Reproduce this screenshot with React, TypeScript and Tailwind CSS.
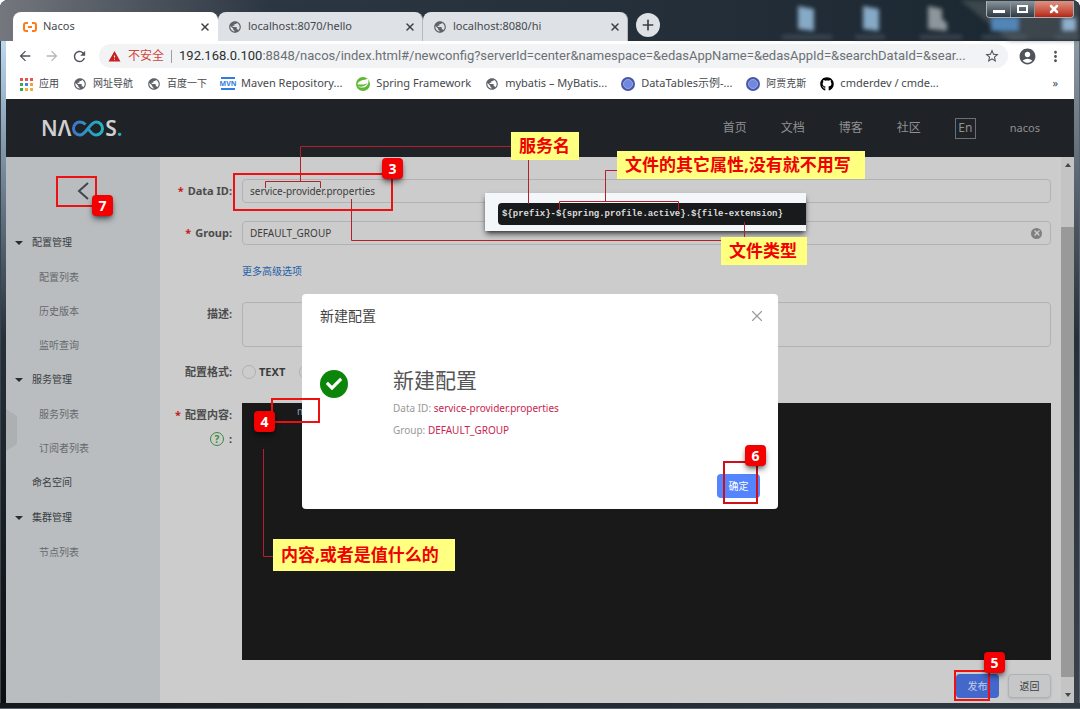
import React from 'react';
import { FaGithub, FaCheck } from 'react-icons/fa';
import { MdAccountCircle, MdPublic, MdStarBorder, MdArrowBack, MdArrowForward, MdRefresh, MdWarning, MdMoreVert } from 'react-icons/md';
import { X, Plus } from 'lucide-react';

type Tab = {
  title: string;
  active?: boolean;
};

type MenuGroup = {
  label: string;
  children: string[];
};

type Bookmark = {
  label: string;
  icon: React.ReactNode;
  cjk?: boolean;
};

const URL_HOST = '192.168.0.100';
const URL_REST =
  ':8848/nacos/index.html#/newconfig?serverId=center&namespace=&edasAppName=&edasAppId=&searchDataId=&sear...';

const TABS: Tab[] = [
  { title: 'Nacos', active: true },
  { title: 'localhost:8070/hello' },
  { title: 'localhost:8080/hi' },
];

const MENU: MenuGroup[] = [
  { label: '配置管理', children: ['配置列表', '历史版本', '监听查询'] },
  { label: '服务管理', children: ['服务列表', '订阅者列表'] },
  { label: '命名空间', children: [] },
  { label: '集群管理', children: ['节点列表'] },
];

const NacosFavicon = () => (
  <svg className="h-[14px] w-[14px] shrink-0" viewBox="0 0 14 14" fill="none" stroke="#ff7a1a" strokeWidth="2">
    <path d="M5 3H3Q1 3 1 5v4q0 2 2 2h2M9 3h2q2 0 2 2v4q0 2-2 2H9M5 7h4" />
  </svg>
);

const Globe = () => <MdPublic className="h-[14px] w-[14px] shrink-0 text-[#5f6368]" />;

const AppsIcon = () => (
  <svg className="h-[14px] w-[14px] shrink-0" viewBox="0 0 14 14">
    <path d="M1 1h3v3H1zM6 1h3v3H6zM11 1h3v3h-3z" fill="#e2574c" />
    <path d="M1 6h3v3H1z" fill="#3aa757" />
    <path d="M6 6h3v3H6z" fill="#4a7fe0" />
    <path d="M11 6h3v3h-3z" fill="#e8a33d" />
    <path d="M1 11h3v3H1z" fill="#3aa757" />
    <path d="M6 11h3v3H6zM11 11h3v3h-3z" fill="#e8b23d" />
  </svg>
);

const MavenIcon = () => (
  <span className="flex h-[13px] w-[14px] shrink-0 items-center justify-center border-y-2 border-[#2f7de0] text-[7px] leading-[9px] font-bold text-[#2f7de0]">
    MVN
  </span>
);

const SpringIcon = () => (
  <svg className="h-[14px] w-[14px] shrink-0" viewBox="0 0 14 14">
    <circle cx="7" cy="7" r="7" fill="#5fb832" />
    <path d="M1.500 7.500C2 3 8 3.500 12 1.500c1.500 4-.5 8.500-5 9-2.500.2-4-.3-5-1 4 .5 7.500 0 9.500-3.500-2.500 2-6 1.500-10 1.500z" fill="#fff" />
  </svg>
);

const BallIcon = () => (
  <svg className="h-[14px] w-[14px] shrink-0" viewBox="0 0 14 14">
    <circle cx="7" cy="7" r="7" fill="#4a56a6" />
    <circle cx="7" cy="7" r="4.500" fill="#7089e0" stroke="#9aa8e6" />
  </svg>
);

const BOOKMARKS: Bookmark[] = [
  { label: '应用', icon: <AppsIcon />, cjk: true },
  { label: '网址导航', icon: <Globe />, cjk: true },
  { label: '百度一下', icon: <Globe />, cjk: true },
  { label: 'Maven Repository...', icon: <MavenIcon /> },
  { label: 'Spring Framework', icon: <SpringIcon /> },
  { label: 'mybatis – MyBatis...', icon: <Globe /> },
  { label: 'DataTables示例-...', icon: <BallIcon /> },
  { label: '阿贾克斯', icon: <BallIcon />, cjk: true },
  { label: 'cmderdev / cmde...', icon: <FaGithub className="h-[14px] w-[14px] shrink-0 text-black" /> },
];

const TitleBar = () => (
  <div className="relative flex h-[41px] items-end bg-linear-to-r from-[#74777d] via-[#2c3642] via-25% to-[#1b2730] pl-[13px]">
    {TABS.map((tab) => (
      <div
        key={tab.title}
        className={`flex h-[29px] w-[205px] shrink-0 items-center gap-1.5 rounded-t-lg border-r pr-1.5 pl-2.5 text-[11px] text-[#45494d] ${
          tab.active ? 'border-white bg-white' : 'border-[#b5b8bd] bg-[#dee1e6]'
        }`}
      >
        {tab.active ? <NacosFavicon /> : <Globe />}
        <span className="flex-1">{tab.title}</span>
        <button aria-label="Close tab">
          <X className="h-3 w-3 text-[#3c4043]" strokeWidth={3} />
        </button>
      </div>
    ))}
    <button
      aria-label="New tab"
      className="mb-1 ml-2 flex h-6 w-6 items-center justify-center rounded-full bg-[#dee1e6]"
    >
      <Plus className="h-4 w-4 text-[#3c4043]" strokeWidth={2.5} />
    </button>

    {/* DESKTOP SEEN THROUGH THE GLASS */}
    <svg className="absolute top-0 right-0 h-[41px] w-[300px] blur-[2px]" viewBox="0 0 300 41">
      <path d="M180 0L300 0V41H230z" fill="#5b6468" opacity="0.5" />
      <path d="M18 6l16 3v22l-16-2zM83 6l16 3v22l-16-2z" fill="#86a9c6" />
      <path d="M148 6l14 3v10l5 4v8l-19-2z" fill="#8d979b" />
      <path d="M211 17h28v14h-28z" fill="#5286b8" />
      <path d="M282 18h14v13h-14z" fill="#8fb0cc" />
      <path d="M2 37h50M75 37h30M140 37h42M202 37h45M275 37h25" stroke="#5a6670" strokeWidth="4" opacity="0.5" />
    </svg>

    <div className="absolute top-px right-[6px] flex h-[17px] overflow-hidden rounded-b border border-t-0 border-[#aab2b8]">
      <button aria-label="Minimize" className="flex w-6 items-end justify-center border-r border-[#8b949b] bg-linear-to-b from-[#8d969d] to-[#2e3a44] pb-1">
        <span className="h-[3px] w-3 bg-white" />
      </button>
      <button aria-label="Maximize" className="flex w-6 items-center justify-center border-r border-[#8b949b] bg-linear-to-b from-[#8d969d] to-[#2e3a44]">
        <span className="h-2 w-[11px] border-2 border-white" />
      </button>
      <button aria-label="Close" className="flex w-[38px] items-center justify-center bg-linear-to-b from-[#dd9382] to-[#b8200f]">
        <X className="h-3 w-3 text-white" strokeWidth={5} />
      </button>
    </div>
  </div>
);

const BrowserToolbar = () => (
  <div className="bg-white pt-[3px] text-[#45494d]">
    <div className="flex h-6 items-center">
      <div className="flex w-[93px] shrink-0 items-center gap-[11px] pl-[11px]">
        <button aria-label="Back">
          <MdArrowBack className="h-4 w-4 text-[#50545a]" />
        </button>
        <button aria-label="Forward">
          <MdArrowForward className="h-4 w-4 text-[#b4b7bb]" />
        </button>
        <button aria-label="Reload">
          <MdRefresh className="h-[17px] w-[17px] text-[#50545a]" />
        </button>
      </div>
      <div className="flex h-6 min-w-0 flex-1 items-center rounded-full bg-[#f1f3f4] pr-2 pl-[9px]">
        <MdWarning className="h-[13px] w-[13px] shrink-0 text-[#c5221f]" />
        <span className="ml-[7px] shrink-0 text-[12px] text-[#d0453a]">不安全</span>
        <span className="mx-[7px] h-[13px] w-px shrink-0 bg-[#9a9da1]" />
        <span className="min-w-0 flex-1 font-['Roboto',sans-serif] text-[13px] whitespace-nowrap text-[#6c7075]">
          <span className="text-[#2b2e31]">{URL_HOST}</span>
          {URL_REST}
        </span>
        <MdStarBorder className="h-4 w-4 shrink-0 text-[#50545a]" />
      </div>
      <div className="flex w-[66px] shrink-0 items-center gap-2.5 pl-2.5">
        <MdAccountCircle className="h-[19px] w-[19px] text-[#50545a]" />
        <MdMoreVert className="h-[17px] w-[17px] text-[#50545a]" />
      </div>
    </div>
    <nav className="flex h-[31px] items-center gap-[14px] pl-[13px] whitespace-nowrap">
      {BOOKMARKS.map((bookmark) => (
        <a
          key={bookmark.label}
          href="#"
          className={`flex items-center gap-1.5 ${bookmark.cjk ? 'text-[10px]' : 'text-[11px]'}`}
        >
          {bookmark.icon}
          {bookmark.label}
        </a>
      ))}
      <span className="mr-4 ml-auto text-[11px]">»</span>
    </nav>
  </div>
);

const NacosLogo = () => (
  <a href="#" aria-label="NACOS" className="flex items-center text-[21px] leading-none font-semibold text-[#cfd0d1]">
    NΛ
    <svg className="h-[17px] w-[34px]" viewBox="0 0 34 17" fill="none" strokeWidth="3">
      <defs>
        <linearGradient id="loop" x1="0" x2="1">
          <stop offset="0" stopColor="#3a78c9" />
          <stop offset="1" stopColor="#22b5c0" />
        </linearGradient>
      </defs>
      <path
        d="M14.500 4.500C12.800 2.700 11 2 9 2a6.500 6.500 0 0 0 0 13C15 15 19 2 25 2a6.500 6.500 0 0 1 0 13C21.500 15 19 11.500 17 8.500"
        stroke="url(#loop)"
      />
    </svg>
    S<span className="text-[#22b5c0]">.</span>
  </a>
);

const NacosHeader = () => (
  <header className="flex h-[58px] items-center bg-[#1f2226] pr-[34px] pl-[35px] text-[12px] text-[#8f9193]">
    <NacosLogo />
    <nav className="ml-auto flex items-center gap-[34px]">
      <a href="#">首页</a>
      <a href="#">文档</a>
      <a href="#">博客</a>
      <a href="#">社区</a>
      <button className="h-[21px] w-[21px] border border-[#6d7073] leading-[18px]">En</button>
      <a href="#" className="text-[11px]">nacos</a>
    </nav>
  </header>
);

const Sidebar = () => (
  <aside className="relative w-[154px] shrink-0 bg-[#b9bdc0] text-[10px] text-[#3a3d40]">
    <div className="flex h-[68px] items-center justify-center">
      <button aria-label="Back">
        <svg className="h-[18px] w-3" viewBox="0 0 12 18" fill="none" stroke="#42464a" strokeWidth="2">
          <path d="M11 1L2 9l9 8" />
        </svg>
      </button>
    </div>
    <ul>
      {MENU.map((group) => (
        <li key={group.label}>
          <div className="flex h-[35px] items-center pl-[9px]">
            <span className="w-[17px]">
              {group.children.length > 0 ? (
                <span className="block h-0 w-0 border-x-4 border-t-4 border-x-transparent border-t-[#2a2c2e]" />
              ) : null}
            </span>
            {group.label}
          </div>
          {group.children.map((item) => (
            <a key={item} href="#" className="flex h-[34px] items-center pl-[33px] text-[#66696c]">
              {item}
            </a>
          ))}
        </li>
      ))}
    </ul>
    <svg className="absolute top-[252px] left-0 h-[42px] w-[11px]" viewBox="0 0 11 42">
      <path d="M0 0L11 7V35L0 42z" fill="#adb0b3" />
    </svg>
  </aside>
);

const FieldLabel = ({
  htmlFor,
  required,
  children,
}: {
  htmlFor: string;
  required?: boolean;
  children: React.ReactNode;
}) => (
  <label htmlFor={htmlFor} className="block text-right text-[11px] leading-6 font-bold text-[#4b4b4b]">
    {required ? <span className="mr-1 text-[#c21a1a]">*</span> : null}
    {children}
  </label>
);

const ConfigForm = () => (
  <form className="grid min-w-0 flex-1 grid-cols-[72px_1fr] content-start gap-x-2.5 pt-[22px] pr-2.5 text-[10px] text-[#3c3c3c]">
    <FieldLabel htmlFor="dataId" required>Data ID:</FieldLabel>
    <input
      id="dataId"
      defaultValue="service-provider.properties"
      className="mb-[18px] h-6 rounded-sm border border-[#b0b2b4] px-[7px]"
    />

    <FieldLabel htmlFor="group" required>Group:</FieldLabel>
    <div className="mb-[18px] flex h-6 items-center rounded-sm border border-[#b0b2b4] pr-2 pl-[7px]">
      <input id="group" defaultValue="DEFAULT_GROUP" className="min-w-0 flex-1" />
      <button type="button" aria-label="Clear" className="flex h-[11px] w-[11px] items-center justify-center rounded-full bg-[#7d7f81]">
        <X className="h-2 w-2 text-[#ccc]" strokeWidth={4} />
      </button>
    </div>

    <a href="#" className="col-start-2 mb-[23px] leading-4 text-[#1f5fa8]">更多高级选项</a>

    <FieldLabel htmlFor="desc">描述:</FieldLabel>
    <textarea id="desc" className="mb-[13px] h-[45px] resize-none rounded-sm border border-[#b0b2b4] p-1" />

    <FieldLabel htmlFor="text">配置格式:</FieldLabel>
    <div className="mb-[19px] flex h-6 items-center text-[11px] font-bold">
      <input id="text" type="radio" name="format" className="h-[14px] w-[14px] appearance-none rounded-full border border-[#aeb0b2]" />
      <label htmlFor="text" className="ml-[3px] w-10">TEXT</label>
      <input aria-label="JSON" type="radio" name="format" className="h-[14px] w-[14px] appearance-none rounded-full border border-[#aeb0b2]" />
    </div>

    <div>
      <FieldLabel htmlFor="content" required>配置内容:</FieldLabel>
      <div className="flex h-6 items-center justify-end gap-[5px] text-[11px] font-bold">
        <span className="flex h-[14px] w-[14px] items-center justify-center rounded-full border border-[#3c8a3e] text-[10px] text-[#3c8a3e]">?</span>
        :
      </div>
    </div>
    <textarea
      id="content"
      defaultValue="m"
      className="h-[257px] resize-none bg-[#191919] pt-px pl-[55px] text-[#8fa0b8]"
    />

    <div className="col-start-2 mt-[14px] flex justify-end gap-[9px]">
      <button type="button" className="h-6 w-[43px] rounded-sm bg-[#4467cc] text-[#c3cce6]">发布</button>
      <button type="button" className="h-6 w-[43px] rounded-sm border border-[#b0b2b4] bg-[#c6c7c8] shadow-sm">返回</button>
    </div>
  </form>
);

const ScrollBar = () => (
  <div className="flex w-[13px] shrink-0 flex-col items-center justify-between bg-[#c4c4c4] py-1.5">
    <span className="h-0 w-0 border-x-[3px] border-b-4 border-x-transparent border-b-[#45484a]" />
    <span className="mt-[60px] mb-[16px] w-full flex-1 bg-[#999]" />
    <span className="h-0 w-0 border-x-[3px] border-t-4 border-x-transparent border-t-[#45484a]" />
  </div>
);

const SuccessDialog = () => (
  <div
    role="dialog"
    aria-labelledby="dialog-title"
    className="absolute top-[294px] left-1/2 flex h-[215px] w-[476px] -translate-x-1/2 flex-col rounded-sm bg-white px-[18px] pb-[11px] text-[10px]"
  >
    <div className="flex h-[43px] items-center justify-between">
      <h2 id="dialog-title" className="text-[14px] text-[#444]">新建配置</h2>
      <button aria-label="Close dialog" className="-mr-1.5">
        <X className="h-[18px] w-[18px] text-[#999]" strokeWidth={1.5} />
      </button>
    </div>
    <div className="flex flex-1 gap-[45px] pt-[29px]">
      <span className="mt-1 flex h-7 w-7 items-center justify-center rounded-full bg-[#0b860b]">
        <FaCheck className="h-4 w-4 text-white" />
      </span>
      <div>
        <h3 className="mb-[3px] text-[21px] leading-7 text-[#555]">新建配置</h3>
        <p className="leading-[22px] text-[#999]">
          Data ID: <span className="text-[#c7254e]">service-provider.properties</span>
        </p>
        <p className="leading-[22px] text-[#999]">
          Group: <span className="text-[#c7254e]">DEFAULT_GROUP</span>
        </p>
      </div>
    </div>
    <button className="h-6 w-[43px] self-end rounded-sm bg-[#5584ff] text-white">确定</button>
  </div>
);

const Badge = ({ value, className }: { value: number; className: string }) => (
  <span
    className={`absolute flex h-[21px] w-[21px] items-center justify-center rounded-sm bg-[#f40000] text-[14px] font-bold text-white shadow-md shadow-black/50 ${className}`}
  >
    {value}
  </span>
);

const Note = ({ text, className }: { text: string; className: string }) => (
  <span
    className={`absolute flex items-center bg-[#ffff80] pl-2 text-[17px] font-bold whitespace-nowrap text-[#f00000] ${className}`}
  >
    {text}
  </span>
);

const Annotations = () => (
  <div className="pointer-events-none absolute inset-0 overflow-hidden">
    {/* CODE SNIPPET */}
    <div className="absolute top-[193px] left-[485px] w-[321px] bg-[#f4f7fa] pt-2.5 pb-1.5 pl-[13px] shadow-md shadow-black/60">
      <code className="block h-[22px] rounded-l-sm bg-[#191a1b] pl-1 font-['Liberation_Mono',monospace] text-[9px] leading-[22px] font-bold text-[#dcdcdc]">
        {'${prefix}-${spring.profile.active}.${file-extension}'}
      </code>
    </div>

    {/* CONNECTORS */}
    <svg className="absolute top-0 left-0 h-[709px] w-[1080px]" viewBox="0 0 1080 709" fill="none" stroke="#b3202c">
      <path d="M511.500 146.500H300.500V182M265.500 188V181.500H320.500V188" />
      <path d="M528.500 160V204M605.500 201V170.500H617M559.500 210V201.500H678.500V210" />
      <path d="M351.500 199V240.500H721M744.500 222V237M263.500 449V556.500H273" />
      <g stroke="#ee1111" strokeWidth="2">
        <path d="M57 177H96V206H57zM234 174H392V210H234zM272 399H319V422H272zM955 671H989V700H955z" />
        <path d="M724 462H757V503H724z" stroke="#d01018" />
      </g>
    </svg>

    <Note text="服务名" className="top-[132px] left-[511px] h-7 w-[68px]" />
    <Note text="文件的其它属性,没有就不用写" className="top-[151px] left-[617px] h-7 w-[248px]" />
    <Note text="文件类型" className="top-[237px] left-[721px] h-7 w-[86px]" />
    <Note text="内容,或者是值什么的" className="top-[539px] left-[273px] h-8 w-[182px]" />

    <Badge value={3} className="top-[158px] left-[382px]" />
    <Badge value={4} className="top-[411px] left-[254px]" />
    <Badge value={5} className="top-[652px] left-[984px]" />
    <Badge value={6} className="top-[445px] left-[745px]" />
    <Badge value={7} className="top-[195px] left-[92px]" />
  </div>
);

export default function App() {
  return (
    <div className="relative flex min-h-screen flex-col overflow-hidden rounded-t-lg bg-[#20272f] font-['Noto_Sans','Noto_Sans_CJK_SC',sans-serif]">
      <TitleBar />
      <div className="flex flex-1">
        <div className="w-1.5 shrink-0 border-l border-[#3b4248] bg-linear-to-b from-[#bcd9f0] via-[#26303b] via-45% to-[#0c0e11]" />
        <main className="flex min-w-0 flex-1 flex-col">
          <BrowserToolbar />
          <NacosHeader />
          <div className="flex flex-1 bg-[#ccc]">
            <Sidebar />
            <ConfigForm />
            <ScrollBar />
          </div>
        </main>
        <div className="w-1.5 shrink-0 border-r border-[#59636b] bg-linear-to-b from-[#8d9aa5] via-[#26303b] via-45% to-[#39424d]" />
      </div>
      <div className="h-1.5 border-b border-[#59636b] bg-linear-to-r from-[#15181b] to-[#303a45]" />
      <SuccessDialog />
      <Annotations />
    </div>
  );
}
